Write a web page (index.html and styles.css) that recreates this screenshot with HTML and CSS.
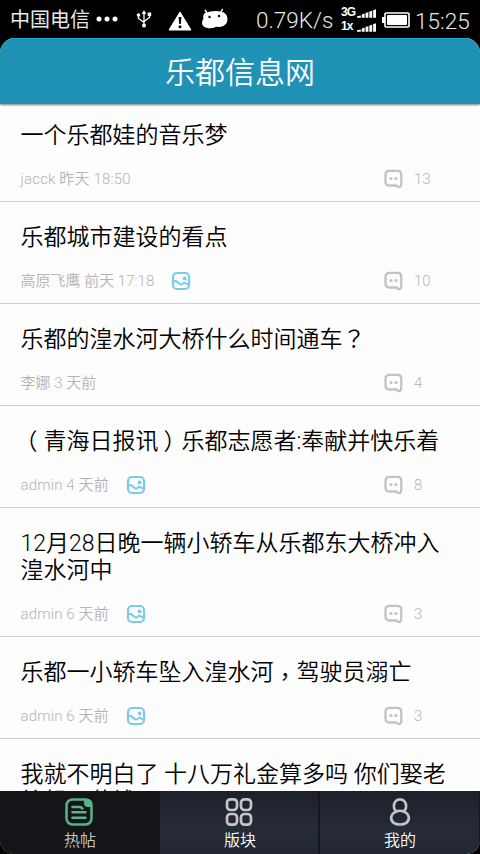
FILE: index.html
```html
<!DOCTYPE html>
<html lang="zh-CN">
<head>
<meta charset="utf-8">
<title>乐都信息网</title>
<link rel="stylesheet" href="styles.css">
</head>
<body>
<svg class="defs" width="0" height="0">
  <symbol id="comment" viewBox="0 0 20 20"><path d="M6.500 1.900h8q3.800 0 3.800 4v8q0 3.900-1.900 4.200-1.600.2-2.900-1.600H6.500q-4 0-4-4V5.900q0-4 4-4z" fill="none" stroke="#c2c2c2" stroke-width="2.300"/><circle cx="8" cy="9.500" r="1.600" fill="#c2c2c2"/><circle cx="13" cy="9.500" r="1.600" fill="#c2c2c2"/></symbol>
  <symbol id="photo" viewBox="0 0 20 20"><rect x="2" y="2" width="16" height="16" rx="4" fill="none" stroke="#7bcbe6" stroke-width="2.200"/><circle cx="13.600" cy="7.500" r="1.900" fill="#7bcbe6"/><path d="M2 11q2.500-2 4.300 0t3.700 2.600q1.200 0 2.200-1.200t3 .2l3 1.300" fill="none" stroke="#7bcbe6" stroke-width="2"/></symbol>
  <symbol id="bars" viewBox="0 0 20 9"><path d="M0 9V7.500l4-1V9zM5 9V5.500l3-1V9zM9 9V4l3-1v6zM13 9V2.500l3-1V9zM17 9V1l3-1v9z" fill="#fff"/></symbol>
</svg>
<div class="screen">
  <div class="status">
    <span class="carrier">中国电信</span>
    <svg class="dots" width="22" height="6"><circle cx="3" cy="3" r="2.500"/><circle cx="11" cy="3" r="2.500"/><circle cx="19" cy="3" r="2.500"/></svg>
    <svg class="usb" width="16" height="18" viewBox="0 0 16 18"><path d="M8 2v13M2.500 5v3.500L8 12.500M13.500 4v3.500L8 11.500" fill="none" stroke="#fff" stroke-width="1.300"/><path d="M8 0l2.300 4H5.700z"/><circle cx="8" cy="15.500" r="2"/><circle cx="2.500" cy="5" r="1.800"/><path d="M11.700 2.500h3.500v3.500h-3.500z"/></svg>
    <svg class="warn" width="24" height="20" viewBox="0 0 24 20"><path d="M12 1l11 18H1z" stroke="#fff" stroke-width="1" stroke-linejoin="round"/><path d="M10.600 6h2.800l-.6 7h-1.600z" fill="#000"/><circle cx="12" cy="15.800" r="1.500" fill="#000"/></svg>
    <svg class="droid" width="28" height="22" viewBox="0 0 28 22"><path d="M6 5L4 2M20 4l1.500-3" stroke="#fff" stroke-width="1.500"/><path d="M4 5Q12 2 20 3.500q6 1.500 6.500 7 .2 7.500-7.500 8.500l-4-.3q-3 2-7.500 1.500Q1 19.500 1 15q0-3 1.500-4.500Q1.500 7 4 5z"/><circle cx="8.500" cy="9" r="1.200" fill="#000"/><circle cx="18" cy="8" r="1.200" fill="#000"/></svg>
    <span class="speed">0.79K/s</span>
    <div class="signals">
      <div class="signal"><span>3G</span><svg width="19" height="9"><use href="#bars"/></svg></div>
      <div class="signal"><span>1x</span><svg width="19" height="9"><use href="#bars"/></svg></div>
    </div>
    <svg class="battery" width="28" height="16" viewBox="0 0 28 16"><rect x="3" y="1" width="24" height="14" rx="1" fill="none" stroke="#fff" stroke-width="1.600"/><rect x="5" y="3" width="20" height="10" rx="1"/><path d="M0 5h3v6H0z"/></svg>
    <span class="clock">15:25</span>
  </div>
  <div class="app">
    <header class="header">乐都信息网</header>
    <main class="list">
      <article class="post"><h2>一个乐都娃的音乐梦</h2><div class="meta"><span class="latin">jacck 昨天 18:50</span><span class="replies"><svg width="20" height="20"><use href="#comment"/></svg>13</span></div></article>
      <article class="post"><h2>乐都城市建设的看点</h2><div class="meta"><span>高原飞鹰 前天 17:18</span><svg class="photo" width="20" height="20"><use href="#photo"/></svg><span class="replies"><svg width="20" height="20"><use href="#comment"/></svg>10</span></div></article>
      <article class="post"><h2>乐都的湟水河大桥什么时间通车<span class="punct question" lang="zh-TW">？</span></h2><div class="meta"><span>李娜 3 天前</span><span class="replies"><svg width="20" height="20"><use href="#comment"/></svg>4</span></div></article>
      <article class="post"><h2><span class="punct open" lang="zh-TW">（</span>青海日报讯<span class="punct close" lang="zh-TW">）</span>乐都志愿者:奉献并快乐着</h2><div class="meta"><span class="latin">admin 4 天前</span><svg class="photo" width="20" height="20"><use href="#photo"/></svg><span class="replies"><svg width="20" height="20"><use href="#comment"/></svg>8</span></div></article>
      <article class="post"><h2>12月28日晚一辆小轿车从乐都东大桥冲入湟水河中</h2><div class="meta"><span class="latin">admin 6 天前</span><svg class="photo" width="20" height="20"><use href="#photo"/></svg><span class="replies"><svg width="20" height="20"><use href="#comment"/></svg>3</span></div></article>
      <article class="post"><h2>乐都一小轿车坠入湟水河<span class="punct comma" lang="zh-TW">，</span>驾驶员溺亡</h2><div class="meta"><span class="latin">admin 6 天前</span><svg class="photo" width="20" height="20"><use href="#photo"/></svg><span class="replies"><svg width="20" height="20"><use href="#comment"/></svg>3</span></div></article>
      <article class="post last-post"><h2>我就不明白了 十八万礼金算多吗 你们娶老给想不花钱吗</h2></article>
    </main>
    <nav class="tabs">
      <div class="tab active"><svg width="30" height="30" viewBox="0 0 30 30"><rect x="1.500" y="2.500" width="25" height="25" rx="6" fill="none" stroke="#58b487" stroke-width="2.500"/><path d="M19 2h5q3 1 3 4v4h-4q-4 0-4-4z" fill="#58b487"/><path d="M7.500 10h8l2 1.500M7.500 15.300h13M7.500 20.700h13" fill="none" stroke="#58b487" stroke-width="2.500" stroke-linecap="round"/></svg><span>热帖</span></div>
      <div class="tab"><svg width="30" height="30" viewBox="0 0 30 30" fill="none" stroke="#c4c4c4" stroke-width="2.700"><rect x="2" y="2.300" width="10" height="10.700" rx="3.500"/><rect x="16" y="2.300" width="10" height="10.700" rx="3.500"/><rect x="2" y="17" width="10" height="10.700" rx="3.500"/><rect x="16" y="17" width="10" height="10.700" rx="3.500"/></svg><span>版块</span></div>
      <div class="tab last"><svg width="30" height="30" viewBox="0 0 30 30" fill="none" stroke="#c4c4c4" stroke-width="2.700"><path d="M11.500 14.500C7 11 8.500 2.500 15 2.500S23 11 18.500 14.500C26.500 17.500 25.500 27.500 15 27.500S3.500 17.500 11.500 14.500q3.500-1.500 7 0"/></svg><span>我的</span></div>
    </nav>
  </div>
</div>
</body>
</html>
```
FILE: styles.css
```css
* { box-sizing: border-box; }
body { margin: 0; background: #000; font-family: Roboto, "Noto Sans CJK SC", sans-serif; font-weight: 350; }
.defs { display: block; height: 0; }
.screen { width: 480px; height: 854px; display: flex; flex-direction: column; overflow: hidden; }
.status { height: 38px; display: flex; align-items: center; color: #e8e8e8; padding: 0 9px 0 10px; white-space: nowrap; }
.status svg { fill: #fff; flex: none; }
.carrier { font-size: 20px; line-height: 38px; font-weight: 400; padding-top: 1px; }
.dots { margin-left: 6px; }
.usb { margin-left: 18px; }
.warn { margin-left: 16px; margin-top: 3px; }
.droid { margin-left: 9px; }
.speed { font-size: 22.500px; margin-left: auto; width: 77px; padding-top: 2px; }
.signals { width: 34px; margin-left: 8px; display: grid; gap: 3px; }
.signal { display: flex; align-items: flex-end; height: 11px; gap: 1px; font: bold 12px/11px "Liberation Sans", sans-serif; letter-spacing: -1px; color: #fff; }
.signal span { width: 15px; }
.battery { margin-left: 7px; margin-top: 2px; }
.clock { font-size: 22.500px; width: 56px; margin-left: 5px; padding-top: 3px; }
.app { flex: 1; min-height: 0; display: flex; flex-direction: column; border-radius: 15px 15px 14px 14px; overflow: hidden; background: #fdfdfd; }
.header { flex: none; height: 66px; background: #1f92b5; border-top: 1px solid #1ba6cf; color: #fff; text-align: center; font-size: 30px; line-height: 68px; box-shadow: 0 1px 2px #777; }
.list { flex: 1; min-height: 0; overflow: hidden; }
.post { padding: 22px 19px 12px 20.500px; border-bottom: 1px solid #cfcfcf; }
.post:first-child { padding-top: 18px; }
.post h2 { margin: 0 0 20px; font-size: 23px; line-height: 27px; font-weight: 350; color: #000; }
.post.last-post h2 { line-height: 27px; padding-top: 0; }
.punct { display: inline-block; width: 23px; height: 27px; vertical-align: top; font-family: "Noto Sans CJK TC", sans-serif; }
.question { line-height: 23px; }
.comma { line-height: 33px; }
.open { line-height: 25px; text-indent: -6px; }
.close { line-height: 25px; text-indent: 5px; }
.meta { display: flex; align-items: center; height: 20px; font-size: 15px; line-height: 20px; color: #b4b4b4; }
.latin { letter-spacing: 0.15px; }
.photo { margin-left: 17px; }
.replies { margin-left: auto; width: 78px; display: flex; gap: 11px; align-items: center; }
.tabs { flex: none; height: 63px; display: grid; grid-template-columns: repeat(3, 160px); background: linear-gradient(#1c202a, #252b38 60%, #222733); color: #fff; font-size: 16px; }
.tab { display: flex; flex-direction: column; align-items: center; padding-top: 6px; }
.tab span { line-height: 24px; margin-top: 2px; }
.tab + .tab { border-right: 2px solid #15171b; padding-left: 2px; }
.tab.last { border-right: 1px solid #15171b; padding-left: 1px; }
.tab.active { background: #141518; color: #c8c8c8; }
```
